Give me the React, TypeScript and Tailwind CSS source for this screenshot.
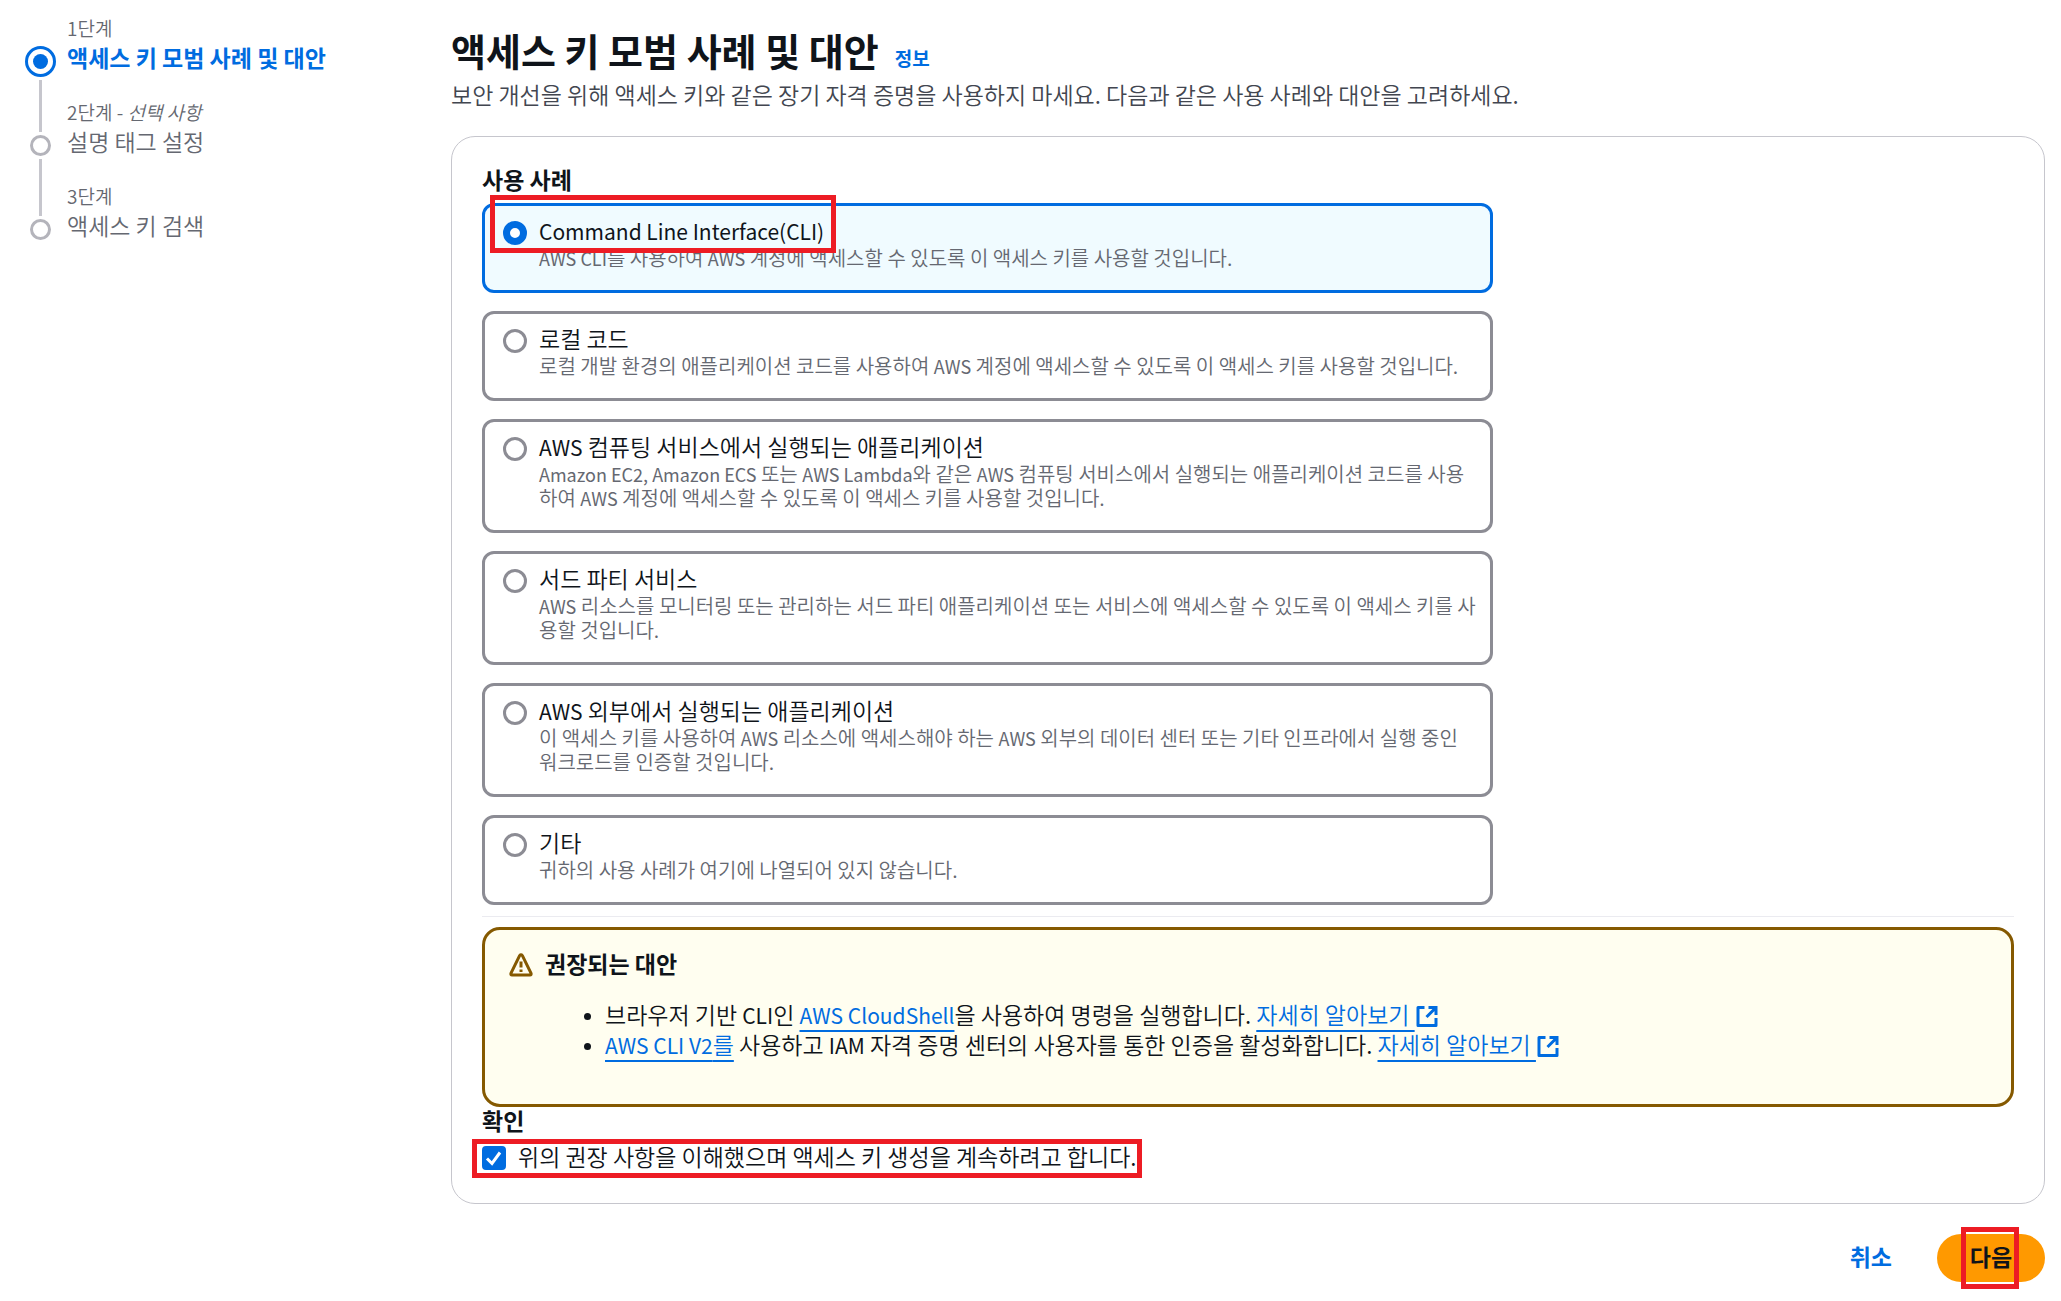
import React from 'react';
import { clsx } from 'clsx';

const steps = [
  { label: '1단계', title: '액세스 키 모범 사례 및 대안', active: true },
  { label: '2단계', optional: '선택 사항', title: '설명 태그 설정' },
  { label: '3단계', title: '액세스 키 검색' }
];

const useCases = [
  {
    id: 'cli',
    title: 'Command Line Interface(CLI)',
    description: 'AWS CLI를 사용하여 AWS 계정에 액세스할 수 있도록 이 액세스 키를 사용할 것입니다.'
  },
  {
    id: 'local',
    title: '로컬 코드',
    description: '로컬 개발 환경의 애플리케이션 코드를 사용하여 AWS 계정에 액세스할 수 있도록 이 액세스 키를 사용할 것입니다.'
  },
  {
    id: 'compute',
    title: 'AWS 컴퓨팅 서비스에서 실행되는 애플리케이션',
    description: 'Amazon EC2, Amazon ECS 또는 AWS Lambda와 같은 AWS 컴퓨팅 서비스에서 실행되는 애플리케이션 코드를 사용하여 AWS 계정에 액세스할 수 있도록 이 액세스 키를 사용할 것입니다.'
  },
  {
    id: 'third-party',
    title: '서드 파티 서비스',
    description: 'AWS 리소스를 모니터링 또는 관리하는 서드 파티 애플리케이션 또는 서비스에 액세스할 수 있도록 이 액세스 키를 사용할 것입니다.'
  },
  {
    id: 'outside',
    title: 'AWS 외부에서 실행되는 애플리케이션',
    description: '이 액세스 키를 사용하여 AWS 리소스에 액세스해야 하는 AWS 외부의 데이터 센터 또는 기타 인프라에서 실행 중인 워크로드를 인증할 것입니다.'
  },
  {
    id: 'other',
    title: '기타',
    description: '귀하의 사용 사례가 여기에 나열되어 있지 않습니다.'
  }
];

// Latin words are set a little smaller and heavier than the Hangul around them
const Mixed = ({ text, small }: { text: string; small?: boolean }) => (
  <>
    {text.split(/([A-Za-z][A-Za-z0-9,() ]*[A-Za-z0-9)])/).map((part, index) =>
      index % 2 === 1 ? (
        <span key={index} className={clsx('font-normal leading-none', small ? 'text-[18px]' : 'text-[21px]')}>
          {part}
        </span>
      ) : (
        part
      )
    )}
  </>
);

const Highlight = ({ className }: { className: string }) => (
  <div aria-hidden="true" className={clsx('absolute border-5 border-[#ed1c24] pointer-events-none', className)} />
);

const ExternalIcon = () => (
  <svg viewBox="0 0 24 24" className="inline h-6 w-6 align-[-4px]" fill="none" stroke="currentColor" strokeWidth="3">
    <path d="M9.5 3.5H3v18h18V14" strokeLinejoin="round" />
    <path d="M13.5 3.5H21V11M21 3.5 11.5 13" />
  </svg>
);

const TextLink = ({ text }: { text: string }) => (
  <a href="#" className="text-[#006ce0] underline decoration-2 underline-offset-[6px]">
    <Mixed text={text} />
  </a>
);

const LearnMore = () => (
  <a href="#" className="text-[#006ce0]">
    <span className="underline decoration-2 underline-offset-[6px]">자세히 알아보기&nbsp;</span>
    <ExternalIcon />
  </a>
);

const StepNavigation = () => (
  <nav className="w-[451px] shrink-0 pl-[25px] pt-[14px]">
    <ol>
      {steps.map((step, index) => (
        <li key={step.label} className="flex h-[84px] gap-[11px]">
          <div className="flex w-[31px] flex-col items-center">
            {step.active ? (
              <div className="mt-8 flex h-[31px] w-[31px] shrink-0 items-center justify-center rounded-full border-3 border-[#006ce0]">
                <div className="h-[15px] w-[15px] rounded-full bg-[#006ce0]" />
              </div>
            ) : (
              <div className="mt-[37px] h-[21px] w-[21px] shrink-0 rounded-full border-3 border-[#b4b4bb]" />
            )}
            {index < steps.length - 1 && (
              <div className={clsx('mt-[3px] w-[3px] shrink-0 bg-[#c6c6cd]', step.active ? 'h-[52px]' : 'h-[57px]')} />
            )}
          </div>
          <div className="text-[#656871]">
            <div className="text-[19px] leading-7">
              {step.label}
              {step.optional && <span>&nbsp;- <em>{step.optional}</em></span>}
            </div>
            <div className={clsx('text-[23px] leading-[30px]', step.active && 'font-bold text-[#006ce0]')}>
              {step.title}
            </div>
          </div>
        </li>
      ))}
    </ol>
  </nav>
);

const UseCases = () => (
  <fieldset>
    <legend className="text-[23px] font-bold leading-[30px]">사용 사례</legend>
    <div className="relative mt-[9px] flex w-[66%] flex-col gap-[18px]">
      {useCases.map((item, index) => (
        <label
          key={item.id}
          className="flex gap-3 rounded-xl border-3 border-[#8c8c94] pb-5 pl-[18px] pr-3 pt-[9px] has-checked:border-[#006ce0] has-checked:bg-[#f0fbff]"
        >
          <input
            type="radio"
            name="use-case"
            defaultChecked={index === 0}
            className="mt-[6px] h-6 w-6 shrink-0 appearance-none rounded-full border-3 border-[#8c8c94] bg-white checked:border-7 checked:border-[#006ce0]"
          />
          <span>
            <span className="block text-[23px] leading-[30px]">
              <Mixed text={item.title} />
            </span>
            <span className="mt-px block text-[20px] leading-6 text-[#656871]">
              <Mixed text={item.description} small />
            </span>
          </span>
        </label>
      ))}
      <Highlight className="-top-2 left-2 h-[58px] w-[346px]" />
    </div>
  </fieldset>
);

const Alternatives = () => (
  <section className="h-[180px] rounded-[18px] border-3 border-[#855900] bg-[#fffef0] pl-6 pt-[18px]">
    <div className="flex items-start gap-3">
      <svg viewBox="0 0 24 24" className="mt-[5px] h-6 w-6" fill="none" stroke="#855900" strokeWidth="3">
        <path d="M10.6 2.6 1.9 20.4Q1.5 22 3 22H21Q22.5 22 22.1 20.4L13.4 2.6Q12 .8 10.6 2.6Z" strokeLinejoin="round" />
        <path d="M12 8.5V14.5M12 16.5V19" />
      </svg>
      <h2 className="text-[23px] font-bold leading-[30px]">권장되는 대안</h2>
    </div>
    <ul className="mt-[21px] list-disc pl-24 text-[23px] leading-[30px]">
      <li className="marker:text-[18px]">
        브라우저 기반 <Mixed text="CLI인" /> <TextLink text="AWS CloudShell" />을 사용하여 명령을 실행합니다. <LearnMore />
      </li>
      <li className="marker:text-[18px]">
        <TextLink text="AWS CLI V2를" /> <Mixed text="사용하고 IAM 자격 증명 센터의 사용자를 통한 인증을 활성화합니다." /> <LearnMore />
      </li>
    </ul>
  </section>
);

const Confirmation = () => (
  <fieldset>
    <legend className="text-[23px] font-bold leading-[26px]">확인</legend>
    <div className="relative mt-[9px] flex w-fit items-start gap-3 pb-[2px] text-[23px] leading-7">
      <span className="relative mt-1 h-6 w-6">
        <input
          id="confirm"
          type="checkbox"
          defaultChecked
          className="block h-6 w-6 appearance-none rounded-[4px] border-3 border-[#8c8c94] checked:border-[#006ce0] checked:bg-[#006ce0]"
        />
        <svg viewBox="0 0 24 24" className="pointer-events-none absolute inset-0 h-6 w-6" fill="none" stroke="#fff" strokeWidth="3">
          <path d="M5 12.5 10 17.5 18 6.5" />
        </svg>
      </span>
      <label htmlFor="confirm">위의 권장 사항을 이해했으며 액세스 키 생성을 계속하려고 합니다.</label>
      <Highlight className="-left-[10px] -right-[5px] -top-[3px] h-[39px]" />
    </div>
  </fieldset>
);

const App = () => {
  return (
    <div className="flex bg-white pb-3 pr-4 font-['Noto_Sans_CJK_KR',sans-serif] font-[350] text-[#0f141a]">
      <StepNavigation />

      <main className="min-w-0 flex-1 pt-6">
        <div className="flex items-baseline gap-4">
          <h1 className="text-[38px] font-bold leading-[52px]">액세스 키 모범 사례 및 대안</h1>
          <a href="#" className="text-[19px] font-bold text-[#006ce0]">정보</a>
        </div>
        <p className="text-[23px] leading-9 text-[#424650]">
          보안 개선을 위해 액세스 키와 같은 장기 자격 증명을 사용하지 마세요. 다음과 같은 사용 사례와 대안을 고려하세요.
        </p>

        <div className="mt-6 rounded-3xl border border-[#c6c6cd] px-[30px] pb-[31px] pt-[27px]">
          <UseCases />
          <hr className="mb-[10px] mt-[11px] border-[#ebebf0]" />
          <Alternatives />
          <Confirmation />
        </div>

        <div className="mt-[30px] flex items-start justify-end gap-[45px] text-[23px] font-bold">
          <button type="button" className="h-11 text-[#006ce0]">취소</button>
          <div className="relative">
            <button type="button" className="h-12 w-[108px] rounded-full bg-[#ff9900] pb-1">다음</button>
            <Highlight className="-top-[7px] left-6 h-[62px] w-[58px]" />
          </div>
        </div>
      </main>
    </div>
  );
};

export default App;
